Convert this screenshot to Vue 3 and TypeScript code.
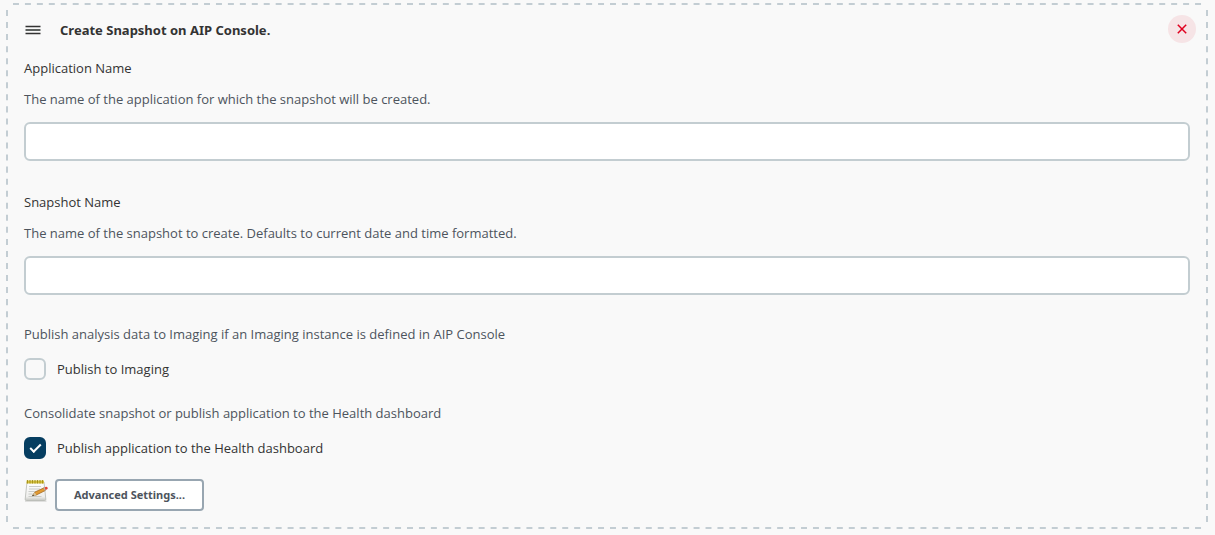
<script setup lang="ts">
import { ref } from 'vue'

const applicationName = ref('')
const snapshotName = ref('')
const publishImaging = ref(false)
const publishHealth = ref(true)
</script>

<template>
  <form class="step" @submit.prevent>
    <svg class="outline" aria-hidden="true">
      <line x1="6" y1="0" x2="100%" y2="0" pathLength="1200" />
      <line x1="6" y1="100%" x2="100%" y2="100%" pathLength="1200" />
      <line x1="0" y1="6" x2="0" y2="100%" pathLength="516" />
      <line x1="100%" y1="6" x2="100%" y2="100%" pathLength="516" />
    </svg>

    <header class="head">
      <svg class="grip" viewBox="0 0 16 10" aria-hidden="true">
        <path d="M0.5 1.5h15M0.5 8.500h15" />
        <path class="grip-middle" d="M0.5 5h15" />
      </svg>
      <h2 class="title">Create Snapshot on AIP Console.</h2>
      <button class="remove" type="button" aria-label="Remove step">
        <svg viewBox="0 0 10 10" aria-hidden="true"><path d="M0.8 0.8L9.2 9.2M9.2 0.8L0.8 9.2" /></svg>
      </button>
    </header>

    <div class="field">
      <label class="label" for="application">Application Name</label>
      <p class="help">The name of the application for which the snapshot will be created.</p>
      <input id="application" v-model="applicationName" class="text" type="text" />
    </div>

    <div class="field">
      <label class="label" for="snapshot">Snapshot Name</label>
      <p class="help">The name of the snapshot to create. Defaults to current date and time formatted.</p>
      <input id="snapshot" v-model="snapshotName" class="text" type="text" />
    </div>

    <div class="option">
      <p class="help">Publish analysis data to Imaging if an Imaging instance is defined in AIP Console</p>
      <label class="check" for="imaging">
        <input id="imaging" v-model="publishImaging" type="checkbox" />
        <span>Publish to Imaging</span>
      </label>
    </div>

    <div class="option">
      <p class="help">Consolidate snapshot or publish application to the Health dashboard</p>
      <label class="check" for="health">
        <input id="health" v-model="publishHealth" type="checkbox" />
        <span>Publish application to the Health dashboard</span>
      </label>
    </div>

    <div class="actions">
      <svg class="notepad" viewBox="0 0 24 24" aria-hidden="true">
        <defs>
          <linearGradient id="paper" x1="0" y1="0" x2="0" y2="1">
            <stop offset="0" stop-color="#ffffff" />
            <stop offset="0.8" stop-color="#eeeeec" />
            <stop offset="1" stop-color="#c4c5c0" />
          </linearGradient>
        </defs>
        <path d="M1 21.5h21.5v1.2H1z" fill="#d5d5d3" />
        <path d="M3 3h17l1.8 17c.1 1-.4 1.5-1.3 1.5h-18c-.9 0-1.4-.5-1.3-1.5z" fill="url(#paper)" stroke="#b5b7b2" stroke-width="0.8" />
        <path d="M2.5 1.5h17.5v3h-17.5z" fill="#d6c340" />
        <path d="M3.5 1v3.5M6 1v3.5M8.5 1v3.5M11 1v3.5M13.5 1v3.5M16 1v3.5M18.5 1v3.5" stroke="#a28d16" stroke-width="0.9" />
        <path d="M5 7.5h12M5 10h11M4.5 12.5h7M4.5 15h4M4.5 17.5h13" stroke="#c5c7c4" stroke-width="0.9" />
        <path d="M8.5 16.5l2.5-3.5 9-4.2 1.3 2.7-9 4.5z" fill="#e29a32" stroke="#9a601b" stroke-width="0.7" />
        <path d="M8 17l2.8-3.7 1.4 2.8z" fill="#d8c49a" />
        <path d="M7.8 17.2l1.5-1.8.7 1.3z" fill="#3b3934" />
        <path d="M19.5 9l1.3-.6 1.3 2.7-1.3.6z" fill="#b7bab8" />
        <path d="M20.5 8.5l1.5-.7c1.4-.4 2.4 1.7 1.2 2.5l-1.5.8z" fill="#e04435" />
      </svg>
      <button class="advanced" type="button">Advanced Settings...</button>
    </div>
  </form>
</template>

<style>
body {
  background: #f9f9f9;
}
</style>

<style scoped>
.step {
  position: relative;
  box-sizing: border-box;
  margin: 3px 7px 5px 6px;
  padding: 12px 18px 18px;
  background: #f9f9f9;
  color: #333;
  font: 13px/20px "Open Sans", "Noto Sans", sans-serif;
}
.outline {
  position: absolute;
  inset: 1px;
  width: calc(100% - 2px);
  height: calc(100% - 2px);
  overflow: visible;
  pointer-events: none;
}
.outline line {
  stroke: #c3cdd3;
  stroke-width: 2;
  stroke-dasharray: 6 6;
}
.head {
  display: flex;
  align-items: center;
  margin-right: -6px;
}
.grip {
  width: 16px;
  height: 10px;
  margin: 2px 19px 0 1px;
  stroke: #333;
  stroke-width: 1.3;
}
.grip-middle {
  stroke: #5c605e;
  stroke-width: 2;
}
.title {
  flex: 1;
  margin: 2px 0 0;
  font: 700 13px/20px "Noto Sans", sans-serif;
}
.remove {
  display: grid;
  place-items: center;
  width: 28px;
  height: 28px;
  padding: 0;
  border: 0;
  border-radius: 50%;
  background: #f6e4e6;
}
.remove svg {
  width: 10px;
  height: 10px;
  stroke: #e0001f;
  stroke-width: 1.5;
}
.field {
  margin-top: 15px;
}
.field + .field {
  margin-top: 31px;
}
.label {
  display: block;
}
.help {
  margin: 0;
  color: #4d545d;
}
.field .help {
  margin: 11px 0 13px;
}
.text {
  display: block;
  box-sizing: border-box;
  width: 100%;
  height: 39px;
  padding: 0 12px;
  border: 2px solid #c3cdd1;
  border-radius: 6px;
  background: #fff;
  color: inherit;
  font: inherit;
}
.option {
  margin-top: 29px;
}
.option + .option {
  margin-top: 23px;
}
.check {
  display: flex;
  align-items: center;
  gap: 11px;
  margin-top: 14px;
}
.check input {
  appearance: none;
  display: grid;
  place-items: center;
  box-sizing: border-box;
  width: 22px;
  height: 22px;
  margin: 0;
  border: 2px solid #c3cdd1;
  border-radius: 6px;
}
.check input:checked {
  border-color: #063e61;
  background: #063e61;
}
.check input:checked::after {
  content: "";
  box-sizing: border-box;
  width: 11px;
  height: 6px;
  margin-bottom: 3px;
  border: solid #fff;
  border-width: 0 0 2px 2px;
  transform: rotate(-45deg);
}
.actions {
  display: flex;
  align-items: flex-start;
  gap: 7px;
  margin-top: 20px;
}
.notepad {
  width: 24px;
  height: 24px;
}
.advanced {
  height: 32px;
  padding: 0 17px;
  border: 2px solid #98a6b1;
  border-radius: 4px;
  background: #fff;
  color: #4d545d;
  font: 700 11px/20px "Noto Sans", sans-serif;
}
</style>
